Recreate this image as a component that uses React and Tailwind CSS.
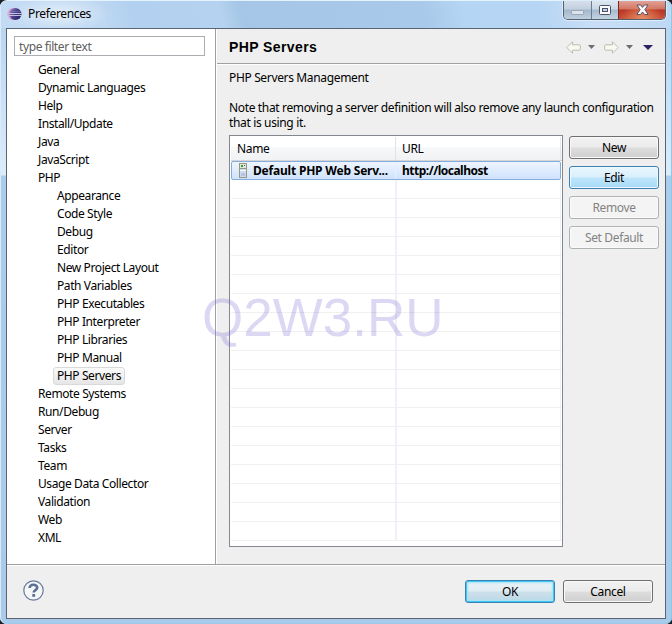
import { useState } from 'react'

const treeItems = [
  { label: 'General' },
  { label: 'Dynamic Languages' },
  { label: 'Help' },
  { label: 'Install/Update' },
  { label: 'Java' },
  { label: 'JavaScript' },
  { label: 'PHP' },
  { label: 'Appearance', child: true },
  { label: 'Code Style', child: true },
  { label: 'Debug', child: true },
  { label: 'Editor', child: true },
  { label: 'New Project Layout', child: true },
  { label: 'Path Variables', child: true },
  { label: 'PHP Executables', child: true },
  { label: 'PHP Interpreter', child: true },
  { label: 'PHP Libraries', child: true },
  { label: 'PHP Manual', child: true },
  { label: 'PHP Servers', child: true },
  { label: 'Remote Systems' },
  { label: 'Run/Debug' },
  { label: 'Server' },
  { label: 'Tasks' },
  { label: 'Team' },
  { label: 'Usage Data Collector' },
  { label: 'Validation' },
  { label: 'Web' },
  { label: 'XML' },
]

const emptyRows = Array.from({ length: 19 }, (_, i) => i)

const buttonStyles = {
  normal:
    'border-[#707070] bg-[linear-gradient(#f2f2f2_0%,#ebebeb_48%,#dddddd_52%,#cfcfcf_100%)] text-black shadow-[inset_0_0_0_1px_#f8f8f8]',
  hover:
    'border-[#3c7fb1] bg-[linear-gradient(#eaf6fd_0%,#d9f0fc_48%,#bee6fd_52%,#a7d9f5_100%)] text-black shadow-[inset_0_0_0_1px_#effaff]',
  primary:
    'border-[#3c7fb1] bg-[linear-gradient(#eaf2f6_0%,#e0edf3_48%,#cce0ea_52%,#bdd7e6_100%)] text-black shadow-[inset_0_0_0_1px_#3fc8f3,inset_0_0_2px_2px_#a5e2f8]',
  disabled: 'border-[#adb2b5] bg-[#f4f4f4] text-[#838383] shadow-[inset_0_0_0_1px_#fafafa]',
}

function Button({ kind = 'normal', children }) {
  return (
    <button
      type="button"
      disabled={kind === 'disabled'}
      className={`flex h-[23px] w-[90px] items-center justify-center rounded-[3px] border pt-px ${buttonStyles[kind]}`}
    >
      {children}
    </button>
  )
}

function EclipseIcon() {
  return (
    <svg width="16" height="16" viewBox="0 0 16 16">
      <defs>
        <linearGradient id="sphere" x1="0" x2="1" y1="0.2" y2="0.8">
          <stop offset="0" stopColor="#8d80bd" />
          <stop offset="0.5" stopColor="#453d86" />
          <stop offset="1" stopColor="#26215e" />
        </linearGradient>
      </defs>
      <ellipse cx="6.4" cy="8" rx="6" ry="6.2" fill="#d9a9cf" />
      <circle cx="8.4" cy="8" r="6.1" fill="url(#sphere)" />
      <path d="M2 7.5h12.6M2 9.5h12.6" stroke="#d0cfec" strokeWidth="0.9" />
      <path d="M3 5.5h11" stroke="#7d78b4" strokeWidth="0.6" />
    </svg>
  )
}

function ServerIcon() {
  return (
    <svg width="10" height="16" viewBox="0 0 10 16" shapeRendering="crispEdges">
      <rect x="1" y="1" width="8" height="15" fill="#98987f" />
      <rect x="2" y="2" width="6" height="5" fill="#e4e8d8" />
      <rect x="3" y="3" width="2" height="2" fill="#24a336" />
      <rect x="6" y="3" width="1" height="1" fill="#50605a" />
      <rect x="2" y="6" width="6" height="1" fill="#8b9b91" />
      <rect x="2" y="7" width="6" height="8" fill="#d0daed" />
      <rect x="2" y="8" width="6" height="1" fill="#f7f9ff" />
      <rect x="3" y="11" width="4" height="3" fill="#b7c3e0" />
    </svg>
  )
}

function NavArrow({ back }) {
  return (
    <svg width="15" height="13" viewBox="0 0 15 13" className={back ? '' : '-scale-x-100'}>
      <path
        d="M.8 6.5 6.5.8v3H13.5q.8 0 .8.8v3.8q0 .8-.8.8H6.5v3Z"
        fill="#f9f9f0"
        stroke="#bbbbb4"
      />
    </svg>
  )
}

function Caret({ className }) {
  return (
    <svg viewBox="0 0 10 5" preserveAspectRatio="none" className={className}>
      <path d="M0 0h10L5 5Z" fill="currentColor" />
    </svg>
  )
}

function WindowButtons() {
  return (
    <div className="flex h-[19px] w-[103px] overflow-hidden rounded-b-[5px] border border-t-0 border-[#53606d] shadow-[0_0_0_1px_#dcecfa]">
      <div className="flex w-7 items-center justify-center border-r border-[#6b7c8e] bg-[linear-gradient(#d5dfe9_0%,#c3d0de_45%,#a4b7ca_50%,#bfd0df_100%)] pt-1">
        <svg width="13" height="5" viewBox="0 0 13 5">
          <rect x="0.5" y="0.5" width="12" height="4" rx="0.5" fill="#dce3eb" stroke="#9ba8b8" />
        </svg>
      </div>
      <div className="flex w-[27px] items-center justify-center border-r border-[#7b261e] bg-[linear-gradient(#dde7f0_0%,#c9d7e4_45%,#a6bacd_50%,#c3d4e3_100%)]">
        <svg width="12" height="10" viewBox="0 0 12 10">
          <rect x="0.5" y="0.5" width="11" height="9" rx="1" fill="#f9f9fa" stroke="#4a5369" />
          <rect x="3.5" y="3.5" width="5" height="3" fill="#c3d0df" stroke="#4a5369" />
        </svg>
      </div>
      <div className="flex flex-1 items-center justify-center bg-[radial-gradient(ellipse_at_bottom,#e68d62_0%,transparent_65%),linear-gradient(#e2a296_0%,#d27767_43%,#bb3522_50%,#c7513a_100%)]">
        <svg width="13" height="12" viewBox="0 0 13 12">
          <path
            d="M1 1h3.6l1.9 2.4L8.4 1H12L8.9 5.7l3.3 4.8H8.5L6.5 8l-2 2.5H.8l3.3-4.8Z"
            fill="#f8f8f8"
            stroke="#59536a"
            strokeLinejoin="round"
          />
        </svg>
      </div>
    </div>
  )
}

function PreferenceTree({ selected, onSelect }) {
  return (
    <ul className="mt-[5px] tracking-[-0.4px]">
      {treeItems.map((item) => (
        <li key={item.label} className={`flex h-[18px] ${item.child ? 'pl-[39px]' : 'pl-5'}`}>
          <button
            type="button"
            onClick={() => onSelect(item.label)}
            className={`h-[18px] rounded-[3px] border px-[3px] text-left leading-4 whitespace-nowrap ${
              selected === item.label
                ? 'border-[#d9d9d9] bg-linear-to-b from-[#fafafa] to-[#e6e6e6]'
                : 'border-transparent'
            }`}
          >
            {item.label}
          </button>
        </li>
      ))}
    </ul>
  )
}

function ServerTable() {
  return (
    <div className="flex h-[412px] w-[334px] flex-col overflow-hidden border border-[#828790] bg-white p-px pr-0">
      <div className="flex h-6 shrink-0 border-b border-[#d5d5d5] bg-[linear-gradient(#ffffff_0%,#ffffff_42%,#f7f8fa_45%,#f1f2f4_100%)] leading-[23px]">
        <div className="w-[165px] border-r border-[#dfe3e8] pl-1.5">Name</div>
        <div className="w-[165px] border-r border-[#e3e8ee] pl-1.5">URL</div>
      </div>
      <div className="flex h-[19px] w-[330px] shrink-0 rounded-[2px] border border-[#84acdd] bg-linear-to-b from-[#eff5fe] to-[#cfe3fd] font-bold">
        <div className="flex w-[164px] border-r border-[#e5effb] pl-1.5">
          <ServerIcon />
          <span className="ml-[5px] leading-[17px] tracking-[-0.2px] whitespace-nowrap">Default PHP Web Serv...</span>
        </div>
        <div className="pl-1.5 leading-[17px] tracking-[-0.5px]">http://localhost</div>
      </div>
      {emptyRows.map((row) => (
        <div key={row} className="flex h-[19px] shrink-0 border-b border-[#f0f0f0]">
          <div className="w-[166px] border-r-2 border-[#edf2f8]" />
          <div className="w-[164px] border-r border-[#edf2f8]" />
        </div>
      ))}
    </div>
  )
}

export default function App() {
  const [selected, setSelected] = useState('PHP Servers')
  const [filter, setFilter] = useState('')

  return (
    <div className="relative h-[624px] w-[672px] overflow-hidden bg-[#1c2127] font-['Noto_Sans','Open_Sans',sans-serif] text-[12px] tracking-[-0.35px] text-black">
      <div className="flex h-full flex-col rounded-[7px] border-t border-[#e5f3ff] bg-[linear-gradient(#b9d5f0_0px,#b9d5f0_28px,#c2dcf5_65px,#dcecfa_174px,#abcdec_175px,#a9cae9_100%)] px-1.5 pb-[5px] shadow-[inset_1px_0_#d9eafa,inset_-1px_0_#8bc9e9,inset_0_-1px_#9ac7ea]">
        <header className="-mx-[5px] flex h-[27px] shrink-0 items-start justify-between rounded-t-[6px] bg-[radial-gradient(50px_18px_at_58px_13px,#e6f0fa_0%,#dce9f780_60%,transparent_100%),linear-gradient(75deg,#c3dbf4_0%,#bfd8f2_15%,#b2d0ef_20%,#b5d3f0_33%,#a5c6e6_36%,#a8c9e9_63%,#b5d5f4_69%,#b6d5f4_80%,#c8def6_88%,#bdd8f3_100%)] px-[5px]">
          <div className="flex items-center pt-[5px] pl-px">
            <EclipseIcon />
            <h1 className="ml-[5px] leading-4">Preferences</h1>
          </div>
          <WindowButtons />
        </header>

        <div className="flex min-h-0 flex-1 flex-col border border-[#596574] bg-[#efefef]">
          <div className="flex h-[536px] shrink-0 border-b border-[#a0a0a0]">
            <aside className="w-[209px] shrink-0 border-r border-[#a0a0a0] bg-white pt-[7px] pl-[7px]">
              <input
                value={filter}
                onChange={(e) => setFilter(e.target.value)}
                placeholder="type filter text"
                className="block h-5 w-[191px] border border-[#abadb3] bg-white px-1 tracking-[-0.4px] placeholder:text-[#606060]"
              />
              <PreferenceTree selected={selected} onSelect={setSelected} />
            </aside>

            <main className="min-w-0 flex-1 border-l border-white">
              <div className="flex h-[35px] items-center justify-between border-b border-[#a0a0a0] pr-3 pl-3">
                <h2 className="pt-0.5 font-['Liberation_Sans',Arial,sans-serif] text-[14px] font-bold tracking-[0.4px]">
                  PHP Servers
                </h2>
                <div className="flex items-center pt-0.5">
                  <NavArrow back />
                  <Caret className="ml-[7px] h-1 w-[7px] text-[#6d6d6d]" />
                  <span className="ml-[9px]">
                    <NavArrow />
                  </span>
                  <Caret className="ml-[7px] h-1 w-[7px] text-[#6d6d6d]" />
                  <Caret className="ml-[10px] h-[5px] w-[10px] text-[#292361]" />
                </div>
              </div>
              <div className="border-t border-white pl-3">
                <p className="pt-[5px] leading-4">PHP Servers Management</p>
                <p className="mt-[14px] leading-[15px] whitespace-nowrap">
                  Note that removing a server definition will also remove any launch configuration
                </p>
                <p className="leading-[15px]">that is using it.</p>
                <div className="mt-[5px] flex gap-1.5">
                  <ServerTable />
                  <div className="flex flex-col gap-[7px] pt-px">
                    <Button>New</Button>
                    <Button kind="hover">Edit</Button>
                    <Button kind="disabled">Remove</Button>
                    <Button kind="disabled">Set Default</Button>
                  </div>
                </div>
              </div>
            </main>
          </div>

          <footer className="flex flex-1 items-start justify-between border-t border-white pr-3 pl-4">
            <svg width="21" height="21" viewBox="0 0 21 21" className="mt-[14px]">
              <circle cx="10.5" cy="10.5" r="9.7" fill="#f5f6f8" stroke="#64789b" strokeWidth="1.2" />
              <path
                d="M6.6 8c0-2 1.5-3.2 3.7-3.2s3.9 1.1 3.9 2.9c0 2.5-3.5 2.3-3.5 4.8"
                fill="none"
                stroke="#5d7092"
                strokeWidth="2.6"
              />
              <rect x="9.3" y="14" width="2.8" height="2.8" fill="#5d7092" />
            </svg>
            <div className="flex gap-2 pt-[14px]">
              <Button kind="primary">OK</Button>
              <Button>Cancel</Button>
            </div>
          </footer>
        </div>
      </div>

      <div className="pointer-events-none absolute top-[288px] left-[202px] font-['Liberation_Sans',Arial,sans-serif] text-[53px] leading-[60px] tracking-normal whitespace-nowrap text-[#7464d3]/25">
        Q2W3.RU
      </div>
    </div>
  )
}
